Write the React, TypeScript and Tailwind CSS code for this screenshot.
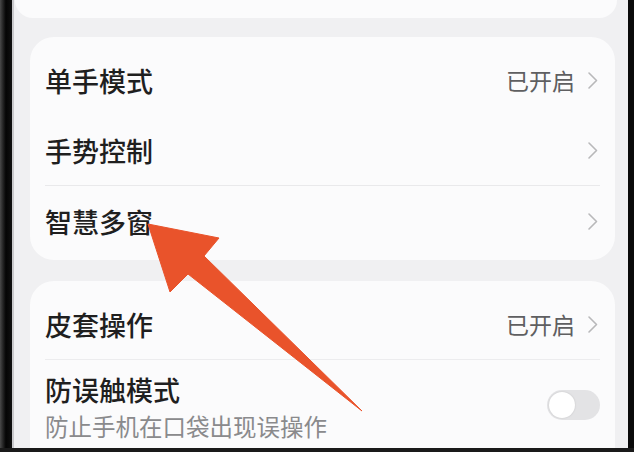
import React from "react";

function Chevron() {
  return (
    <svg width="13" height="19" viewBox="0 0 13 19" className="shrink-0">
      <path d="M3 2 L10.5 9.5 L3 17" fill="none" stroke="#b8b8ba" strokeWidth="1.6" strokeLinecap="round" strokeLinejoin="round" />
    </svg>
  );
}

function Row({ title, value, arrow = true }: { title: string; value?: string; arrow?: boolean }) {
  return (
    <div className="flex h-[70px] items-center justify-between pl-[15px] pr-[16px]">
      <span className="text-[27px] font-medium text-[#1f1f1f] leading-none">{title}</span>
      <div className="flex items-center gap-[11px]">
        {value && <span className="text-[23px] text-[#5f5f61] leading-none">{value}</span>}
        {arrow && <Chevron />}
      </div>
    </div>
  );
}

export default function App() {
  return (
    <div
      className="relative flex h-[452px] w-[634px] flex-col overflow-hidden bg-[#f0f0f2]"
      style={{ fontFamily: '"Noto Sans CJK SC", "Noto Sans", sans-serif' }}
    >
      <div className="flex flex-1 min-h-0">
        <div className="w-[14px] shrink-0 bg-linear-to-r from-[#4a4a4a] via-[#050505] to-[#111] border-r-2 border-[#c9c9cc]" />
        <div className="flex flex-1 min-w-0 flex-col">
          <div className="ml-[1px] mr-[11px] h-[18px] shrink-0 rounded-b-[22px] bg-[#fbfbfc]" />
          <div className="ml-[16px] mr-[13px] mt-[19px] flex h-[223px] shrink-0 flex-col rounded-[24px] bg-[#fbfbfc] pt-[8px]">
            <Row title="单手模式" value="已开启" />
            <Row title="手势控制" />
            <div className="ml-[15px] mr-[15px] h-px bg-[#e9e9eb]" />
            <Row title="智慧多窗" />
          </div>
          <div className="ml-[16px] mr-[13px] mt-[21px] flex flex-1 flex-col rounded-t-[24px] bg-[#fbfbfc] pt-[8px]">
            <Row title="皮套操作" value="已开启" />
            <div className="ml-[15px] mr-[15px] h-px bg-[#ececee]" />
            <div className="flex items-center justify-between pl-[15px] pr-[15px] pt-[13px]">
              <div className="flex flex-col">
                <span className="text-[27px] font-medium text-[#1f1f1f] leading-[34px]">防误触模式</span>
                <span className="mt-[3px] text-[23.5px] text-[#8a8a8c] leading-[32px]">防止手机在口袋出现误操作</span>
              </div>
              <div className="mb-[6px] flex h-[30px] w-[53px] items-center rounded-full bg-[#e3e3e5] px-[2px]">
                <div className="h-[26px] w-[26px] rounded-full bg-white shadow-[0_0_2px_rgba(0,0,0,0.15)]" />
              </div>
            </div>
          </div>
        </div>
        <div className="w-[6px] shrink-0 bg-[#0a0a0a]" />
      </div>
      <div className="h-[4px] shrink-0 bg-[#1a1a1a]" />
      <svg className="pointer-events-none absolute inset-0" width="634" height="452" viewBox="0 0 634 452">
        <polygon
          points="148,224 219,238 204,256 362,411 188,274 170,292"
          fill="#e9532b"
          stroke="#e9532b"
          strokeWidth="1"
          strokeLinejoin="round"
        />
      </svg>
    </div>
  );
}
